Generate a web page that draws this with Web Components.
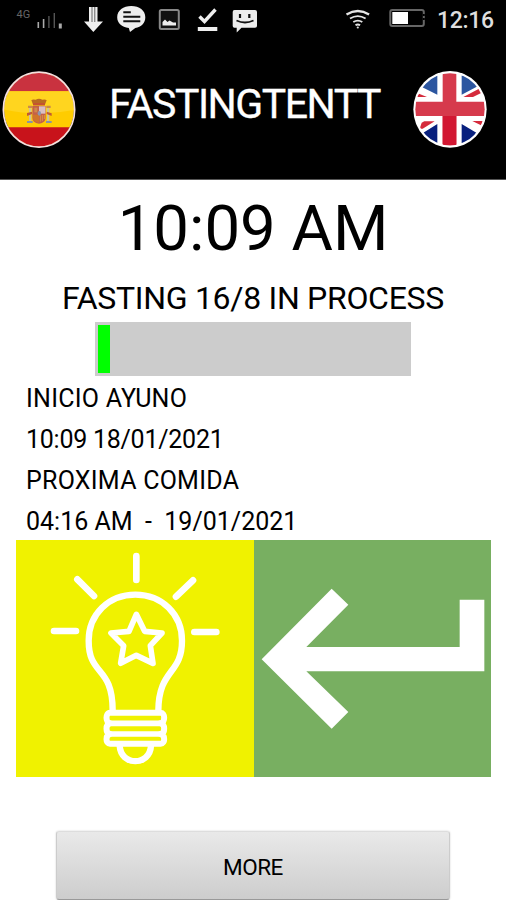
<!DOCTYPE html>
<html lang="en">
<head>
<meta charset="utf-8">
<title>FastingTentt</title>
<style>
  body {
    margin: 0;
    background: #fff;
    font-family: Roboto, "Liberation Sans", sans-serif;
    color: #000;
  }
</style>
</head>
<body>
<fasting-app></fasting-app>

<script>
(function () {
  function define(name, html) {
    const template = document.createElement('template');
    template.innerHTML = html;

    customElements.define(
      name,
      class extends HTMLElement {
        constructor() {
          super();
          this.attachShadow({ mode: 'open' });
          this.shadowRoot.append(template.content.cloneNode(true));
        }
      },
    );
  }

  define('status-bar', `
    <style>
      :host {
        display: flex;
        justify-content: space-between;
        height: 40px;
        background: #000;
        color: #dedede;
      }

      svg {
        display: block;
      }

      .right {
        display: flex;
      }

      .time {
        width: 69px;
        font-size: 23px;
        font-weight: 500;
        line-height: 41px;
        letter-spacing: -0.3px;
      }

      .net {
        font: 11px Roboto, sans-serif;
      }
    </style>
    <svg width="270" height="40" viewBox="0 0 270 40">
      <text class="net" x="16.5" y="17.5" fill="#666">4G</text>
      <g fill="#aaa">
        <path d="M37.5 22h1.6v6h-1.6z"/>
        <path d="M42.8 19h1.6v9h-1.6z"/>
        <path d="M48.2 16h1.4v12h-1.4z" fill="#555"/>
        <path d="M53.6 13h1.4v15h-1.4z" fill="#555"/>
        <path d="M58.8 23.500h3v5h-3z"/>
      </g>
      <path d="M89 7h8.500v14.500h5.500l-9.700 10.500-9.300-10.500h5z" fill="#eee"/>
      <path d="M92 7v15M94.800 7v15" stroke="#555" stroke-width=".9"/>
      <path d="M131.300 6c8 0 14 4.500 14 11.200 0 6-4 9.700-10 10.800l-5.300 4-1.200-4c-7-.8-11.600-4.800-11.600-10.800 0-6.700 6.100-11.200 14.100-11.200z" fill="#eee"/>
      <path d="M123.300 12.300h7.500M123.300 16.700h17M123.300 21.200h17" stroke="#111" stroke-width="2"/>
      <rect x="159.800" y="10" width="19" height="19" rx="1.500" fill="#111" stroke="#888" stroke-width="2"/>
      <path d="M162.500 25.500v-3.500l2.500-2.500 2.500 2.500 2-1.500 3.500 2 3 0v3z" fill="#eee"/>
      <path d="M199.500 16.500l5 5L215.500 9.500" fill="none" stroke="#eee" stroke-width="3.400"/>
      <path d="M197.800 27h19.500v4h-19.500z" fill="#eee"/>
      <path d="M234.500 10h20.500q2 0 2 2v14q0 1.700-2 1.700h-13.500l-4.800 4.800v-4.800h-2.200q-1.800 0-1.800-1.700v-14q0-2 1.800-2z" fill="#eee"/>
      <path d="M240 14v4M249.300 14v4" stroke="#111" stroke-width="2.200"/>
      <path d="M236.500 20.500q8.500 4 17 0" fill="none" stroke="#111" stroke-width="1.800"/>
    </svg>
    <div class="right">
      <svg width="93" height="40" viewBox="344 0 93 40">
        <g fill="none" stroke="#e4e4e4" stroke-width="1.900">
          <path d="M346.500 14.500q11.300-7 22.600 0" stroke-width="2.300"/>
          <path d="M350 18.500q7.800-4.800 15.600 0"/>
          <path d="M353.300 22q4.500-2.800 9 0"/>
          <path d="M355.500 25.200q2.300-1.500 4.600 0"/>
        </g>
        <circle cx="357.800" cy="27.500" r="1.100" fill="#ddd"/>
        <rect x="390.300" y="10" width="33.500" height="16" rx="2" fill="#000" stroke="#666" stroke-width="2"/>
        <path d="M392.300 12h15.700v12h-15.700z" fill="#fff"/>
        <path d="M423.800 14v8" stroke="#000" stroke-width="2" stroke-dasharray="2 2"/>
      </svg>
      <div class="time">12:16</div>
    </div>
  `);

  define('flag-es', `
    <style>
      :host, svg {
        display: block;
        width: 76px;
        height: 78px;
      }
    </style>
    <svg viewBox="2 32 228 234" preserveAspectRatio="none">
      <defs><clipPath id="es"><ellipse cx="116" cy="148" rx="105" ry="111"/></clipPath></defs>
      <g clip-path="url(#es)">
        <path d="M0 30h240v240H0z" fill="#fc0"/>
        <path d="M0 30h240v63H0z" fill="#c9323f"/>
        <path d="M0 201h240v70H0z" fill="#c8131b"/>
        <path d="M0 93h240v52q-120 28-240 0z" fill="#ffd51f"/>
      </g>
      <!-- coat of arms -->
      <g>
        <path d="M86 144h7v42h-7zM140 144h7v42h-7z" fill="#cfc19a"/>
        <path d="M83 136h13v7H83zM138 136h13v7h-13z" fill="#c98a4a"/>
        <path d="M80 182h17v6H80zM137 182h17v6h-17z" fill="#8b93a0"/>
        <path d="M80 158l15-4v7l-15 6zM139 154l15 5v8l-15-6z" fill="#c15a35"/>
        <path d="M93 120q3-4 13-2 10-5 20 0 10-2 13 2l-6 15H99z" fill="#b96b22"/>
        <path d="M98 128h36v7H98z" fill="#c5532f"/>
        <path d="M96 137h40v35q0 15-20 18-20-3-20-18z" fill="#c4604a"/>
        <path d="M116 138h19v22h-19z" fill="#d9bfc4"/>
        <path d="M98 163h18v24q-16-3-18-14z" fill="#d0752a"/>
        <path d="M120 165v19M126 164v18M132 164v12" stroke="#e0a040" stroke-width="2.500"/>
        <path d="M102 142h9v14h-9z" fill="#d08a4b"/>
        <ellipse cx="117" cy="159" rx="5" ry="7" fill="#8d96ad"/>
      </g>
      <ellipse cx="116" cy="148" rx="107" ry="112.500" fill="none" stroke="#f6dfdf" stroke-width="5"/>
    </svg>
  `);

  define('flag-uk', `
    <style>
      :host, svg {
        display: block;
        width: 76px;
        height: 78px;
      }
    </style>
    <svg viewBox="-1 3 228 234" preserveAspectRatio="none">
      <defs><clipPath id="uk"><ellipse cx="113" cy="118" rx="104" ry="108"/></clipPath></defs>
      <ellipse cx="113" cy="118" rx="110" ry="115" fill="#fff"/>
      <g clip-path="url(#uk)">
        <path d="M75 16v58L30 52 50 28zM148 16v58l48-25-20-25z" fill="#2c56a0"/>
        <path d="M75 220v-58l-42 26 20 22zM148 220v-58l44 26-20 24z" fill="#08207e"/>
        <path d="M20 71l24 10H10zM153 81l47-25 8 12-26 13zM22 176l6-18 8-4h31l-36 22zM180 153h32l-6 13z" fill="#d52b3c"/>
        <path d="M91 8h41v87h90v43h-90v90H91v-90H8V95h83z" fill="#d63a4c"/>
        <path d="M91 138h41v90H91z" fill="#d21732"/>
      </g>
    </svg>
  `);

  define('app-header', `
    <style>
      :host {
        display: flex;
        justify-content: space-between;
        align-items: flex-start;
        box-sizing: border-box;
        height: 140px;
        padding: 31px 18px 0 1px;
        background: #000;
        border-bottom: 1px solid #555;
        color: #fff;
      }

      .title {
        font-size: 41px;
        line-height: 66px;
        letter-spacing: -1.5px;
        -webkit-text-stroke: 0.3px #fff;
      }
    </style>
    <flag-es></flag-es>
    <div class="title"><slot></slot></div>
    <flag-uk></flag-uk>
  `);

  define('progress-bar', `
    <style>
      :host {
        display: block;
        box-sizing: border-box;
        width: 316px;
        height: 54px;
        padding: 3px;
        background: #ccc;
      }

      .value {
        width: 12px;
        height: 100%;
        background: #0f0;
      }
    </style>
    <div class="value"></div>
  `);

  define('info-row', `
    <style>
      :host {
        display: block;
        font-size: 25px;
        line-height: 41px;
        letter-spacing: 0.25px;
      }

      :host([date]) {
        letter-spacing: -0.25px;
      }

      :host([next]) {
        letter-spacing: 0;
      }

      div {
        white-space: pre;
      }
    </style>
    <div><slot></slot></div>
  `);

  define('tips-tile', `
    <style>
      :host {
        display: block;
        background: #f0f200;
      }

      svg {
        display: block;
        width: 100%;
        height: 100%;
      }
    </style>
    <svg viewBox="19 15 712 711" fill="none" stroke="#fff" stroke-linecap="round" stroke-linejoin="round">
      <path d="M379 63v72M202 133l50 50M549 136l-51 49M132 288h66M553 291h66" stroke-width="20"/>
      <path d="M308 527C308 390 236 425 236 317C236 238 296 179 376 179C456 179 516 238 516 317C516 420 446 400 445 527" stroke-width="19"/>
      <path d="M379 238l25 51 52 5-35 38 8 53-50-24-47 24 9-53-38-38 54-5z" stroke-width="17"/>
      <path d="M300 533h152c14 0 14 30 0 32c14 3 14 29 0 32c14 3 14 29 0 29H300c-14 0-14-26 0-29c-14-3-14-29 0-32c-14-2-14-32 0-32z" stroke-width="18"/>
      <path d="M300 565h152M300 597h152" stroke-width="17"/>
      <path d="M329 632c3 62 91 62 94 0" stroke-width="19"/>
    </svg>
  `);

  define('back-tile', `
    <style>
      :host {
        display: block;
        background: #78af61;
      }

      svg {
        display: block;
        width: 100%;
        height: 100%;
      }
    </style>
    <svg viewBox="11 15 711 711">
      <path d="M34 373L244 161l50 48-126 127h460V194h74v215H168l126 122-50 50z" fill="#fff"/>
    </svg>
  `);

  define('more-button', `
    <style>
      :host {
        display: block;
      }

      button {
        display: block;
        box-sizing: border-box;
        width: 100%;
        height: 69px;
        padding: 2px 0 0;
        border: 1px solid #ccc;
        border-top-color: #ddd;
        border-bottom-color: #999;
        border-radius: 3px;
        background: linear-gradient(#e9e9e9, #cdcdcd);
        box-shadow: 0 0 2px rgba(0, 0, 0, 0.2);
        font: 22.5px Roboto, sans-serif;
        letter-spacing: -0.5px;
        color: #000;
      }
    </style>
    <button><slot></slot></button>
  `);

  define('fasting-app', `
    <style>
      :host {
        display: block;
        width: 506px;
        height: 900px;
        overflow: hidden;
      }

      .clock {
        font-size: 63.5px;
        line-height: 98px;
        text-align: center;
      }

      .state {
        font-size: 32px;
        line-height: 41px;
        letter-spacing: -0.3px;
        text-align: center;
      }

      progress-bar {
        margin: 3px auto 0;
      }

      .info {
        box-sizing: border-box;
        height: 164px;
        padding: 2px 0 0 26px;
      }

      .tiles {
        display: grid;
        grid-template-columns: 238px 237px;
        grid-template-rows: 237px;
        padding-left: 16px;
      }

      more-button {
        width: 394px;
        margin: 54px 0 0 56px;
      }
    </style>
    <status-bar></status-bar>
    <app-header>FASTINGTENTT</app-header>
    <div class="clock">10:09 AM</div>
    <div class="state">FASTING 16/8 IN PROCESS</div>
    <progress-bar></progress-bar>
    <div class="info">
      <info-row>INICIO AYUNO</info-row>
      <info-row date>10:09 18/01/2021</info-row>
      <info-row>PROXIMA COMIDA</info-row>
      <info-row next>04:16 AM  -  19/01/2021</info-row>
    </div>
    <div class="tiles">
      <tips-tile></tips-tile>
      <back-tile></back-tile>
    </div>
    <more-button>MORE</more-button>
  `);
})();
</script>
</body>
</html>
